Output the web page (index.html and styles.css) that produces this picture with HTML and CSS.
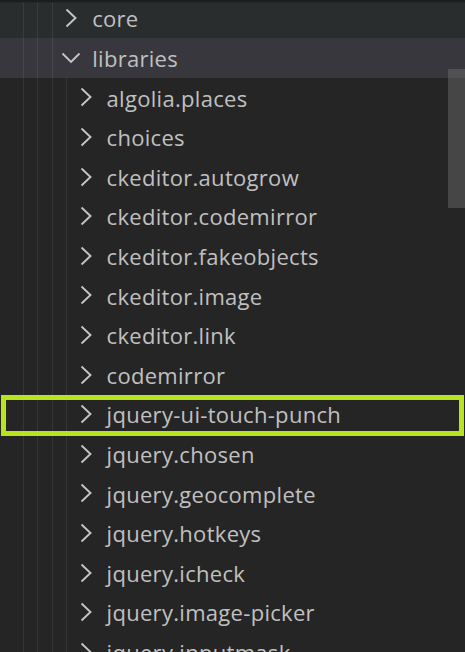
FILE: index.html
```html
<!DOCTYPE html>
<html>
<head>
<meta charset="utf-8">
<link rel="stylesheet" href="styles.css">
</head>
<body>
<div class="explorer">
  <div class="tree">
    <div class="row hover d3"><span class="guides"><i></i><i></i><i></i></span><span class="tw"><svg viewBox="0 0 26 40" width="26" height="40"><polyline points="0.5,11.5 9.5,20 0.5,28.5"/></svg></span><span class="label">core</span></div>
    <div class="row selected d3"><span class="guides"><i></i><i></i><i></i></span><span class="tw"><svg viewBox="0 0 26 40" width="26" height="40"><polyline points="-3.5,15.5 5,24 13.5,15.5"/></svg></span><span class="label">libraries</span></div>
    <div class="row"><span class="guides"><i></i><i></i><i></i><i></i></span><span class="tw"><svg viewBox="0 0 26 40" width="26" height="40"><polyline points="0.5,11.5 9.5,20 0.5,28.5"/></svg></span><span class="label">algolia.places</span></div>
    <div class="row"><span class="guides"><i></i><i></i><i></i><i></i></span><span class="tw"><svg viewBox="0 0 26 40" width="26" height="40"><polyline points="0.5,11.5 9.5,20 0.5,28.5"/></svg></span><span class="label">choices</span></div>
    <div class="row"><span class="guides"><i></i><i></i><i></i><i></i></span><span class="tw"><svg viewBox="0 0 26 40" width="26" height="40"><polyline points="0.5,11.5 9.5,20 0.5,28.5"/></svg></span><span class="label">ckeditor.autogrow</span></div>
    <div class="row"><span class="guides"><i></i><i></i><i></i><i></i></span><span class="tw"><svg viewBox="0 0 26 40" width="26" height="40"><polyline points="0.5,11.5 9.5,20 0.5,28.5"/></svg></span><span class="label">ckeditor.codemirror</span></div>
    <div class="row"><span class="guides"><i></i><i></i><i></i><i></i></span><span class="tw"><svg viewBox="0 0 26 40" width="26" height="40"><polyline points="0.5,11.5 9.5,20 0.5,28.5"/></svg></span><span class="label">ckeditor.fakeobjects</span></div>
    <div class="row"><span class="guides"><i></i><i></i><i></i><i></i></span><span class="tw"><svg viewBox="0 0 26 40" width="26" height="40"><polyline points="0.5,11.5 9.5,20 0.5,28.5"/></svg></span><span class="label">ckeditor.image</span></div>
    <div class="row"><span class="guides"><i></i><i></i><i></i><i></i></span><span class="tw"><svg viewBox="0 0 26 40" width="26" height="40"><polyline points="0.5,11.5 9.5,20 0.5,28.5"/></svg></span><span class="label">ckeditor.link</span></div>
    <div class="row"><span class="guides"><i></i><i></i><i></i><i></i></span><span class="tw"><svg viewBox="0 0 26 40" width="26" height="40"><polyline points="0.5,11.5 9.5,20 0.5,28.5"/></svg></span><span class="label">codemirror</span></div>
    <div class="row marked"><span class="guides"><i></i><i></i><i></i><i></i></span><span class="tw"><svg viewBox="0 0 26 40" width="26" height="40"><polyline points="0.5,11.5 9.5,20 0.5,28.5"/></svg></span><span class="label">jquery-ui-touch-punch</span></div>
    <div class="row"><span class="guides"><i></i><i></i><i></i><i></i></span><span class="tw"><svg viewBox="0 0 26 40" width="26" height="40"><polyline points="0.5,11.5 9.5,20 0.5,28.5"/></svg></span><span class="label">jquery.chosen</span></div>
    <div class="row"><span class="guides"><i></i><i></i><i></i><i></i></span><span class="tw"><svg viewBox="0 0 26 40" width="26" height="40"><polyline points="0.5,11.5 9.5,20 0.5,28.5"/></svg></span><span class="label">jquery.geocomplete</span></div>
    <div class="row"><span class="guides"><i></i><i></i><i></i><i></i></span><span class="tw"><svg viewBox="0 0 26 40" width="26" height="40"><polyline points="0.5,11.5 9.5,20 0.5,28.5"/></svg></span><span class="label">jquery.hotkeys</span></div>
    <div class="row"><span class="guides"><i></i><i></i><i></i><i></i></span><span class="tw"><svg viewBox="0 0 26 40" width="26" height="40"><polyline points="0.5,11.5 9.5,20 0.5,28.5"/></svg></span><span class="label">jquery.icheck</span></div>
    <div class="row"><span class="guides"><i></i><i></i><i></i><i></i></span><span class="tw"><svg viewBox="0 0 26 40" width="26" height="40"><polyline points="0.5,11.5 9.5,20 0.5,28.5"/></svg></span><span class="label">jquery.image-picker</span></div>
    <div class="row"><span class="guides"><i></i><i></i><i></i><i></i></span><span class="tw"><svg viewBox="0 0 26 40" width="26" height="40"><polyline points="0.5,11.5 9.5,20 0.5,28.5"/></svg></span><span class="label">jquery.inputmask</span></div>
  </div>
  <div class="shadow"></div>
  <div class="scrollbar"></div>
</div>
</body>
</html>
```
FILE: styles.css
```css
html, body {
  margin: 0;
  padding: 0;
  background: #252526;
  height: 652px;
  overflow: hidden;
}
.explorer {
  position: relative;
  width: 465px;
  height: 652px;
  overflow: hidden;
  background: #252526;
  font-family: "Open Sans", "Noto Sans", sans-serif;
  font-size: 22px;
  letter-spacing: 0.3px;
  color: #c0c0c0;
}
.tree {
  display: flex;
  flex-direction: column;
  margin-top: -1.6px;
}
.row {
  position: relative;
  display: flex;
  align-items: center;
  height: 39.6px;
  flex: none;
  padding-left: 23px;
  white-space: nowrap;
}
.row.hover { background: #2a2d2e; }
.row.selected { background: #37373d; }
.guides {
  display: flex;
  align-self: stretch;
}
.guides i {
  display: block;
  width: 14.4px;
  box-sizing: border-box;
  border-left: 1.6px solid rgba(255, 255, 255, 0.075);
}
.tw {
  width: 26px;
  height: 40px;
  flex: none;
  display: flex;
}
.tw svg {
  overflow: visible;
}
.tw polyline {
  fill: none;
  stroke: #c5c5c5;
  stroke-width: 1.9;
  stroke-linecap: butt;
  stroke-linejoin: miter;
}
.label {
  line-height: 39.6px;
  position: relative;
  top: 1px;
}
.row.marked::after {
  content: "";
  position: absolute;
  left: 1px;
  right: 1px;
  top: 1px;
  bottom: -2px;
  border: 5px solid #b6e51e;
}
.shadow {
  position: absolute;
  left: 0;
  top: 0;
  right: 0;
  height: 3px;
  background: linear-gradient(#1b1c1c, #1e1f1f 60%, rgba(30, 31, 31, 0));
}
.scrollbar {
  position: absolute;
  left: 448px;
  top: 69px;
  width: 17px;
  height: 139px;
  background: rgba(121, 121, 121, 0.4);
}
```
